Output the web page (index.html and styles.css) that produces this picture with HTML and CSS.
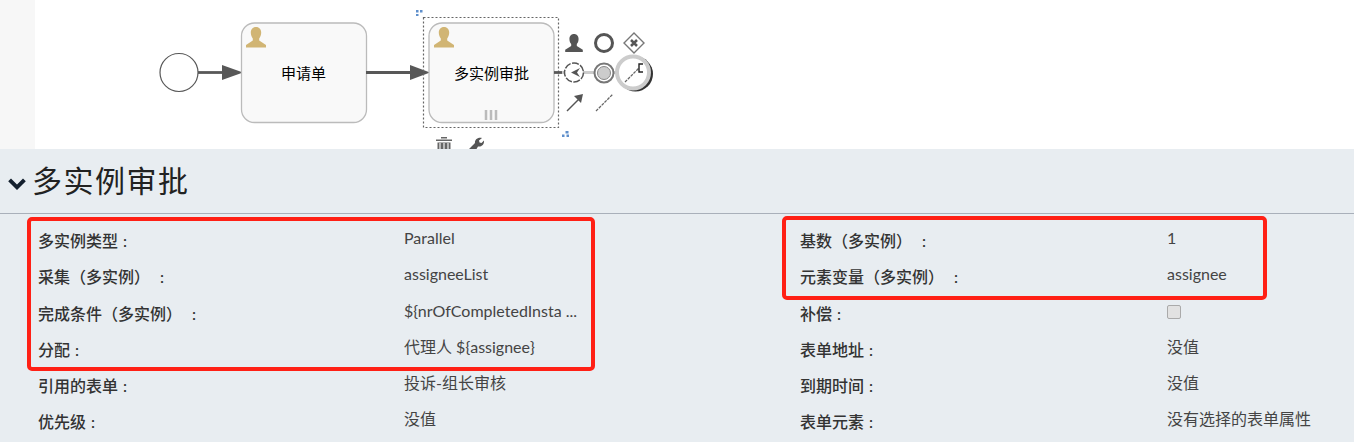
FILE: index.html
```html
<!DOCTYPE html>
<html lang="zh-CN">
<head>
    <meta charset="UTF-8">
    <meta name="viewport" content="width=device-width, initial-scale=1.0">
    <title>多实例审批</title>
    <link rel="stylesheet" href="styles.css">
</head>
<body>
    <div class="canvas">
        <svg class="diagram" width="1319" height="149" viewBox="35 0 1319 149">
            <defs>
                <g id="user">
                    <path d="M0 0c-3.400 0-5.200 2.600-5.200 5.600 0 2.400.8 4.400 2 5.800v2.200L-10 18v2.400h20V18l-6.800-4.400v-2.200c1.200-1.400 2-3.400 2-5.800C5.200 2.600 3.400 0 0 0z"/>
                </g>
            </defs>

            <circle class="start" cx="179" cy="72.500" r="19"/>
            <path class="flow" d="M198 72.500h26"/>
            <path class="head" d="M222 65v15l21-7.500z"/>
            <rect class="task" x="241.500" y="23" width="125" height="99.500" rx="13"/>
            <use href="#user" class="user-mark" x="256" y="27"/>
            <text class="task-name" x="303.500" y="79">申请单</text>
            <path class="flow" d="M366 72.500h46"/>
            <path class="head" d="M410 65v15l20-7.500z"/>

            <rect class="task" x="429" y="23" width="125" height="99.500" rx="13"/>
            <use href="#user" class="user-mark" x="444" y="27"/>
            <text class="task-name" x="491.500" y="79">多实例审批</text>
            <path class="bars" d="M486 110v10M491 110v10M496 110v10"/>
            <rect class="select" x="423.500" y="17.500" width="135" height="110"/>
            <path class="handle" d="M416 10h2.500v2.500h-2.500zM420 10h2.500v2.500h-2.500zM416 14h2.500v2h-2.500zM565.500 131h3v2.500h-3zM562 134.500h2.500v2.500h-2.500zM566.500 134.500h2.500v2.500h-2.500z"/>

            <path class="flow" d="M554 72.500h8"/>
            <path class="drag" d="M562 72.500h56"/>
            <use href="#user" class="tool-mark" transform="translate(574 34) scale(.88)"/>
            <circle class="ring" cx="604" cy="43" r="8.500"/>
            <path class="gate" d="M634 33l10 10-10 10-10-10z"/>
            <path class="gate-x" d="M631 40l6 6M637 40l-6 6"/>
            <circle class="event" cx="574" cy="72.500" r="9.500"/>
            <path class="event-arrow" d="M580 68l-9 4.500 9 4.500-3-4.500z"/>
            <circle class="end-outer" cx="604" cy="73" r="9.500"/>
            <circle class="end-inner" cx="604" cy="73" r="6.500"/>
            <path class="line-tool" d="M567 111l13-13"/>
            <path class="line-head" d="M583 94l-9 2 7 7z"/>
            <path class="dash-tool" d="M596 111l17-17"/>

            <circle class="target-edge" cx="635.500" cy="74" r="17.500"/>
            <circle class="target" cx="633" cy="72.500" r="16"/>
            <path class="dash-tool" d="M625 82l14-14"/>
            <path class="target-mark" d="M643 64h-4v8h4"/>

            <path class="tool-bin" d="M441 137h6v1.500h-6zM436 139.500h16v1.500h-16zM437.500 142.500h13V149h-13z"/>
            <path class="tool-slots" d="M440 143v6M444 143v6M448 143v6"/>
            <path class="wrench" d="M469 149l6-6c-.5-3 2.500-6 7-5l-3 2.500.5 2 2 .5 2.500-2.500c.5 4-2.500 6.500-6 6l-1.500 2.500z"/>
        </svg>
    </div>

    <div class="panel">
        <div class="panel-title">
            <svg class="chevron" width="18" height="14" viewBox="0 0 18 14"><path d="M3 1.500 9 7.500 15 1.500 17.800 4.300 9 13 .2 4.300z"/></svg>
            <h1>多实例审批</h1>
        </div>
        <div class="props">
            <div class="prop"><span class="prop-label">多实例类型 :</span><span class="prop-value">Parallel</span></div>
            <div class="prop"><span class="prop-label">基数（多实例）&nbsp; :</span><span class="prop-value">1</span></div>
            <div class="prop"><span class="prop-label">采集（多实例）&nbsp; :</span><span class="prop-value">assigneeList</span></div>
            <div class="prop"><span class="prop-label">元素变量（多实例）&nbsp; :</span><span class="prop-value">assignee</span></div>
            <div class="prop"><span class="prop-label">完成条件（多实例）&nbsp; :</span><span class="prop-value">${nrOfCompletedInsta ...</span></div>
            <div class="prop"><span class="prop-label">补偿 :</span><span class="prop-value"><span class="check"></span></span></div>
            <div class="prop"><span class="prop-label">分配 :</span><span class="prop-value">代理人 ${assignee}</span></div>
            <div class="prop"><span class="prop-label">表单地址 :</span><span class="prop-value">没值</span></div>
            <div class="prop"><span class="prop-label">引用的表单 :</span><span class="prop-value">投诉-组长审核</span></div>
            <div class="prop"><span class="prop-label">到期时间 :</span><span class="prop-value">没值</span></div>
            <div class="prop"><span class="prop-label">优先级 :</span><span class="prop-value">没值</span></div>
            <div class="prop"><span class="prop-label">表单元素 :</span><span class="prop-value">没有选择的表单属性</span></div>
        </div>
        <div class="mark mark-left"></div>
        <div class="mark mark-right"></div>
    </div>
</body>
</html>
```

FILE: styles.css
```css
html, body {
    margin: 0;
    height: 442px;
    overflow: hidden;
}
body {
    font-family: Lato, "Noto Sans CJK SC", sans-serif;
    font-size: 16px;
    color: #333;
    background-color: #e8edf1;
}

/* diagram */
.canvas {
    height: 149px;
    padding-left: 35px;
    background-color: #f7f7f7;
}
.diagram {
    display: block;
    background-color: #fff;
}
.start {
    fill: #fff;
    stroke: #585858;
    stroke-width: 1.2;
}
.flow {
    fill: none;
    stroke: #585858;
    stroke-width: 2.800;
}
.head {
    fill: #585858;
}
.task {
    fill: #f9f9f9;
    stroke: #bbb;
    stroke-width: 1.300;
}
.user-mark {
    fill: #d1b574;
}
.tool-mark {
    fill: #555;
}
.task-name {
    font-size: 15px;
    fill: #000;
    text-anchor: middle;
}
.bars {
    stroke: #bbb;
    stroke-width: 2.500;
}
.select {
    fill: none;
    stroke: #666;
    stroke-width: 1.200;
    stroke-dasharray: 2 2;
}
.handle {
    fill: #5f8fcb;
}
.drag {
    stroke: #ccc;
    stroke-width: 3;
}
.ring {
    fill: #fff;
    stroke: #555;
    stroke-width: 3;
}
.gate {
    fill: #fff;
    stroke: #777;
    stroke-width: 1.400;
}
.gate-x {
    stroke: #555;
    stroke-width: 2.500;
}
.event {
    fill: #fff;
    stroke: #555;
    stroke-width: 1.500;
    stroke-dasharray: 7 1.500;
}
.event-arrow {
    fill: #555;
}
.end-outer {
    fill: #fff;
    stroke: #777;
    stroke-width: 2;
}
.end-inner {
    fill: #ccc;
    stroke: #888;
}
.line-tool {
    stroke: #555;
    stroke-width: 1.500;
}
.line-head {
    fill: #555;
}
.dash-tool {
    stroke: #666;
    stroke-width: 1.300;
    stroke-dasharray: 3 1;
}
.target {
    fill: #fff;
    stroke: #ccc;
    stroke-width: 4;
}
.target-edge {
    fill: #333;
}
.target-mark {
    fill: none;
    stroke: #222;
    stroke-width: 1.400;
}
.tool-bin {
    fill: #666;
}
.tool-slots {
    stroke: #e8e8e8;
    stroke-width: 1.300;
}
.wrench {
    fill: #555;
}

/* properties */
.panel {
    position: relative;
}
.panel-title {
    display: flex;
    align-items: center;
    gap: 6px;
    height: 60px;
    padding: 0 0 4px 8px;
    border-bottom: 1px solid #a9b0ba;
}
.chevron {
    margin-top: 9px;
    fill: #14202e;
}
h1 {
    margin: 0;
    font-size: 30px;
    font-weight: 400;
    letter-spacing: 1.500px;
    color: #222;
}
.props {
    display: grid;
    grid-template-columns: 762px 1fr;
    grid-auto-rows: 36.300px;
    padding: 9px 0 0 38px;
}
.prop {
    display: flex;
    align-items: flex-start;
}
.prop-label {
    width: 366px;
    flex: none;
    padding-top: 6px;
    line-height: 24px;
    font-weight: 500;
    word-spacing: 1px;
    color: #333;
}
.prop:nth-child(even) .prop-label {
    width: 367px;
}
.prop-value {
    padding-top: 3px;
    line-height: 24px;
    color: #444;
}
.check {
    display: block;
    width: 12px;
    height: 12px;
    margin-top: 6px;
    background-color: #e2e2e2;
    border: 1px solid #aaa;
    border-radius: 2px;
}
.mark {
    position: absolute;
    border: 4px solid #ff2015;
    border-radius: 5px;
    box-sizing: border-box;
}
.mark-left {
    top: 68px;
    left: 27px;
    width: 568px;
    height: 154px;
}
.mark-right {
    top: 67px;
    left: 782px;
    width: 485px;
    height: 84px;
}
```
